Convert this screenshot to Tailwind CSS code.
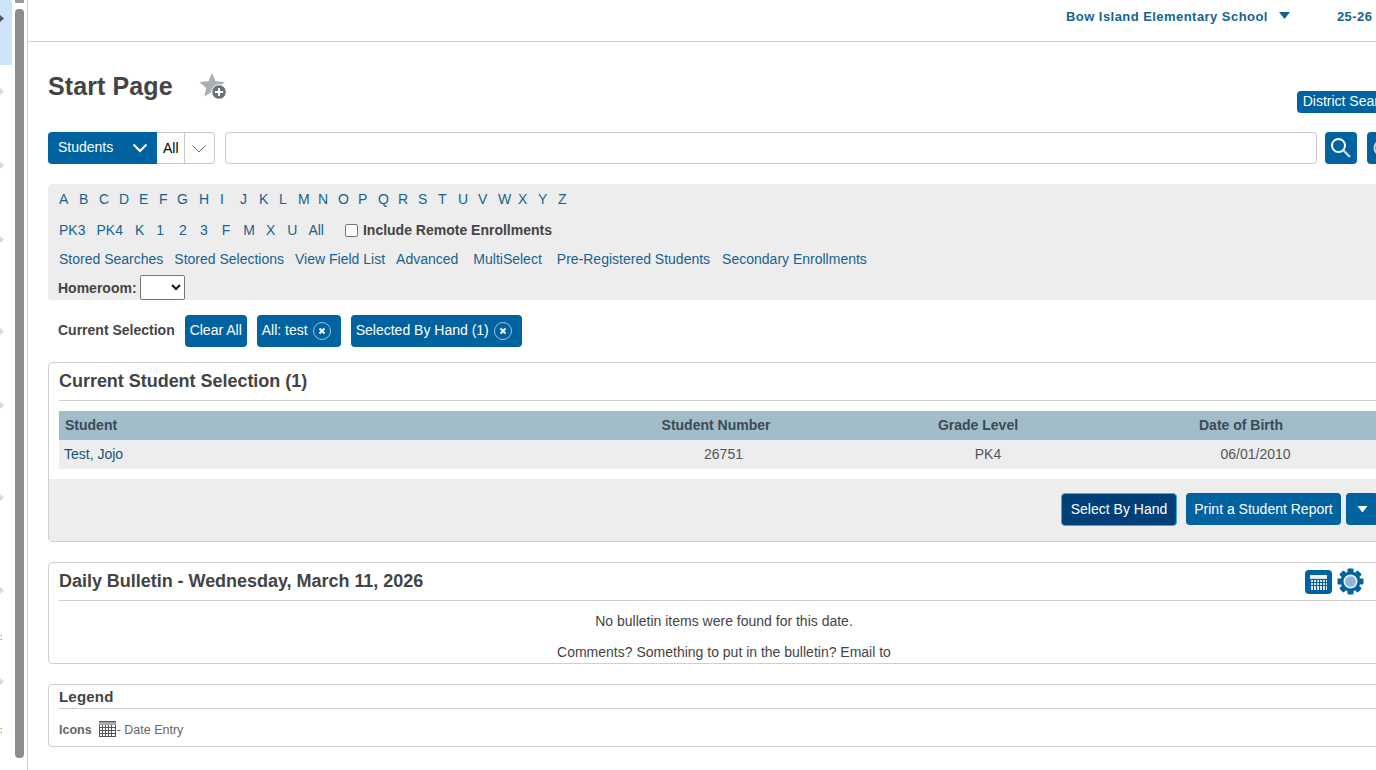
<!DOCTYPE html>
<html lang="en">
<head>
<meta charset="utf-8">
<title>Start Page</title>
<script src="https://cdn.jsdelivr.net/npm/@tailwindcss/browser@4"></script>
</head>
<body class="bg-white overflow-hidden font-['Liberation_Sans',Arial,sans-serif] text-[14px] text-[#444444]">
<div class="flex w-[1376px] h-[770px] overflow-hidden">
  <aside class="flex w-[28px] shrink-0 h-full border-r border-[#cfcfcf]">
    <div class="w-[12px] shrink-0 flex flex-col overflow-hidden">
      <div class="h-[65px] bg-[#cde4fb] pt-[15px] shrink-0"><svg width="4" height="7" viewBox="0 0 4 7" class="block"><path d="M0 0l4 3.5L0 7z" fill="#555"/></svg></div>
      <svg width="4" height="7" viewBox="0 0 4 7" class="block mt-[23px] shrink-0"><path d="M0 0l4 3.5L0 7z" fill="#d8d8d8"/></svg>
      <svg width="4" height="7" viewBox="0 0 4 7" class="block mt-[67px] shrink-0"><path d="M0 0l4 3.5L0 7z" fill="#d8d8d8"/></svg>
      <svg width="4" height="7" viewBox="0 0 4 7" class="block mt-[67px] shrink-0"><path d="M0 0l4 3.5L0 7z" fill="#d8d8d8"/></svg>
      <svg width="4" height="7" viewBox="0 0 4 7" class="block mt-[85px] shrink-0"><path d="M0 0l4 3.5L0 7z" fill="#d8d8d8"/></svg>
      <svg width="4" height="7" viewBox="0 0 4 7" class="block mt-[67px] shrink-0"><path d="M0 0l4 3.5L0 7z" fill="#d8d8d8"/></svg>
      <svg width="4" height="7" viewBox="0 0 4 7" class="block mt-[85px] shrink-0"><path d="M0 0l4 3.5L0 7z" fill="#d8d8d8"/></svg>
      <svg width="4" height="7" viewBox="0 0 4 7" class="block mt-[86px] shrink-0"><path d="M0 0l4 3.5L0 7z" fill="#d8d8d8"/></svg>
      <div class="mt-[38px] shrink-0 text-[9px] leading-[10px] text-[#555]">:</div>
      <svg width="4" height="7" viewBox="0 0 4 7" class="block mt-[36px] shrink-0"><path d="M0 0l4 3.5L0 7z" fill="#d8d8d8"/></svg>
      <div class="mt-[40px] shrink-0 text-[9px] leading-[10px] text-[#555]">:</div>
    </div>
    <div class="w-[9px] shrink-0 flex flex-col ml-[3px]">
      <div class="h-[3px] bg-[#999] rounded-b-[1px] mb-[6px]"></div>
      <div class="h-[749px] bg-[#8d8d8d] rounded-[4px]"></div>
    </div>
  </aside>
  <main class="w-[1420px] shrink-0">
    <header class="h-[42px] border-b border-[#cfcfcf] flex justify-start pl-[1038px] pt-[9px] font-bold text-[13px] leading-[15px] tracking-[0.45px] text-[#16638f]">
      <span class="whitespace-nowrap">Bow Island Elementary School</span>
      <svg width="11" height="7" viewBox="0 0 11 7" class="ml-[11px] mt-[3px] shrink-0"><path d="M0 0h11L5.5 7z" fill="#16638f"/></svg>
      <span class="ml-[47px] text-[#16638f]">25-26</span>
    </header>
    <div class="pl-[20px] pr-[10px]">
      <div class="flex h-[48px] pt-[28px] items-start">
        <h1 class="text-[25px] leading-[33px] font-bold tracking-[0.1px] text-[#444444]">Start Page</h1>
        <svg width="28" height="28" viewBox="0 0 28 28" class="ml-[26px] mt-[2px] shrink-0">
          <path d="M13 1l3.600 8.200 8.900.8-6.700 5.900 2 8.700L13 20.100l-7.800 4.500 2-8.700L.5 10l8.900-.8z" fill="#a9b0b4"/>
          <circle cx="20" cy="20" r="7.300" fill="#69747a" stroke="#fff" stroke-width="1"/>
          <path d="M20 16v8M16 20h8" stroke="#fff" stroke-width="2"/>
        </svg>
        <div class="ml-[1070px] mt-[21px] h-[22px] w-[100px] bg-[#00629f] rounded-[4px] text-white text-[14px] leading-[21px] pl-[6px] whitespace-nowrap shrink-0">District Search</div>
      </div>
      <div class="flex items-start mt-[42px] h-[32px]">
        <div class="w-[109px] h-[32px] bg-[#00629f] rounded-l-[4px] text-white leading-[30px] pl-[10px] flex justify-between pr-[9px] shrink-0">
          <span>Students</span>
          <svg width="16" height="10" viewBox="0 0 16 10" class="mt-[11px]"><path d="M1.500 1.500L8 8l6.500-6.500" fill="none" stroke="#fff" stroke-width="2"/></svg>
        </div>
        <div class="w-[58px] h-[32px] border border-l-0 border-[#c6c6c6] rounded-r-[4px] flex shrink-0 text-black">
          <span class="w-[28px] border-r border-[#c6c6c6] pl-[6px] leading-[31px]">All</span>
          <svg width="14" height="8" viewBox="0 0 14 8" class="ml-[7px] mt-[12px]"><path d="M.5.500L7 7l6.500-6.500" fill="none" stroke="#666" stroke-width="1"/></svg>
        </div>
        <div class="ml-[10px] w-[1092px] h-[32px] border border-[#c9c9c9] rounded-[4px] shrink-0"></div>
        <div class="ml-[8px] w-[32px] h-[32px] bg-[#00629f] rounded-[4px] shrink-0 flex items-center justify-center">
          <svg width="24" height="24" viewBox="0 0 24 24"><circle cx="9.500" cy="9.500" r="6.500" fill="none" stroke="#fff" stroke-width="2"/><path d="M14.500 14.500L21 21" stroke="#c7d9e6" stroke-width="2.400"/></svg>
        </div>
        <div class="ml-[10px] w-[32px] h-[32px] bg-[#00629f] rounded-[4px] shrink-0 flex items-center pl-[5px]">
          <svg width="20" height="20" viewBox="0 0 20 20"><circle cx="10" cy="10" r="7.500" fill="none" stroke="#c7d9e6" stroke-width="2"/></svg>
        </div>
      </div>
      <section class="mt-[20px] h-[116px] bg-[#ededed] rounded-[4px] pl-[11px] pt-[7px] text-[#16638f] leading-[16px]">
        <nav class="flex h-[16px] gap-x-0">
          <a class="w-[20px]">A</a><a class="w-[20px]">B</a><a class="w-[20px]">C</a><a class="w-[20px]">D</a><a class="w-[20px]">E</a><a class="w-[18px]">F</a><a class="w-[22px]">G</a><a class="w-[20px]">H</a><a class="w-[20px] pl-[1px]">I</a><a class="w-[20px] pl-[1px]">J</a><a class="w-[20px]">K</a><a class="w-[19px]">L</a><a class="w-[20px]">M</a><a class="w-[20px]">N</a><a class="w-[20px]">O</a><a class="w-[20px]">P</a><a class="w-[20px]">Q</a><a class="w-[20px]">R</a><a class="w-[20px]">S</a><a class="w-[20px]">T</a><a class="w-[20px]">U</a><a class="w-[20px]">V</a><a class="w-[20px]">W</a><a class="w-[20px]">X</a><a class="w-[20px]">Y</a><a class="w-[20px]">Z</a>
        </nav>
        <div class="flex items-center h-[16px] mt-[15px]">
          <a>PK3</a><a class="ml-[11px]">PK4</a><a class="ml-[12px]">K</a><a class="ml-[12px]">1</a><a class="ml-[15px]">2</a><a class="ml-[13px]">3</a><a class="ml-[14px]">F</a><a class="ml-[13px]">M</a><a class="ml-[11px]">X</a><a class="ml-[12px]">U</a><a class="ml-[11px]">All</a>
          <input type="checkbox" class="ml-[21px] w-[13px] h-[13px] mt-[1px] appearance-none bg-white border border-[#767676] rounded-[2px]">
          <span class="ml-[5px] font-bold text-[#444444]">Include Remote Enrollments</span>
        </div>
        <div class="flex h-[16px] mt-[13px]">
          <a>Stored Searches</a><a class="ml-[11px]">Stored Selections</a><a class="ml-[11px]">View Field List</a><a class="ml-[11px]">Advanced</a><a class="ml-[15px]">MultiSelect</a><a class="ml-[15px]">Pre-Registered Students</a><a class="ml-[12px]">Secondary Enrollments</a>
        </div>
        <div class="flex items-center mt-[8px] -ml-[1px]">
          <label class="font-bold text-[#444444]">Homeroom:</label>
          <div class="ml-[3px] w-[45px] h-[25px] bg-white border border-[#767676] rounded-[2px] flex justify-end items-center pr-[3px]">
            <svg width="10" height="7" viewBox="0 0 10 7"><path d="M1 1l4 4 4-4" fill="none" stroke="#111" stroke-width="2"/></svg>
          </div>
        </div>
      </section>
      <div class="flex items-center mt-[15px] h-[32px] pl-[10px]">
        <span class="font-bold text-[#444444] mr-[10px] pb-[2px]">Current Selection</span>
        <button class="h-[32px] w-[62px] pb-[2px] bg-[#00629f] rounded-[4px] text-white">Clear All</button>
        <button class="ml-[10px] h-[32px] w-[84px] pl-[5px] bg-[#00629f] rounded-[4px] text-white flex items-center">
          <span class="pb-[2px]">All: test</span>
          <svg width="18" height="18" viewBox="0 0 18 18" class="ml-[5px]"><circle cx="9" cy="9" r="8.500" fill="none" stroke="#9cc3de"/><path d="M6.500 6.500l5 5M11.500 6.500l-5 5" stroke="#fff" stroke-width="2"/></svg>
        </button>
        <button class="ml-[10px] h-[32px] w-[171px] pl-[5px] bg-[#00629f] rounded-[4px] text-white flex items-center">
          <span class="whitespace-nowrap pb-[2px]">Selected By Hand (1)</span>
          <svg width="18" height="18" viewBox="0 0 18 18" class="ml-[5px]"><circle cx="9" cy="9" r="8.500" fill="none" stroke="#9cc3de"/><path d="M6.500 6.500l5 5M11.500 6.500l-5 5" stroke="#fff" stroke-width="2"/></svg>
        </button>
      </div>
      <section class="mt-[15px] h-[180px] border border-[#cfcfcf] rounded-[4px] flex flex-col">
        <div class="mx-[10px] h-[38px] border-b border-[#cfcfcf] shrink-0 font-bold text-[18px] leading-[36px] tracking-[-0.03px] text-[#444444]">Current Student Selection (1)</div>
        <div class="mx-[10px] mt-[10px] shrink-0">
          <div class="grid grid-cols-[531px_265px_265px_265px] h-[29px] bg-[#a2bdca] font-bold items-center leading-[29px] text-[#3c4a52]">
            <span class="pl-[6px]">Student</span><span class="text-center pr-[13px]">Student Number</span><span class="text-center pr-[19px]">Grade Level</span><span class="text-center pr-[23px]">Date of Birth</span>
          </div>
          <div class="grid grid-cols-[531px_265px_265px_265px] h-[29px] bg-[#ededed] items-center leading-[29px] text-[#555555]">
            <a class="pl-[5px] text-[#16507f]">Test, Jojo</a><span class="text-center pl-[2px]">26751</span><span class="text-center pl-[1px]">PK4</span><span class="text-center pl-[6px]">06/01/2010</span>
          </div>
        </div>
        <div class="mt-[10px] flex-1 bg-[#ededed] flex items-start pl-[1012px] pt-[14px]">
          <button class="w-[116px] h-[33px] bg-[#003f78] border border-[#37b0e0] rounded-[4px] text-white shrink-0">Select By Hand</button>
          <button class="ml-[9px] w-[155px] h-[32px] bg-[#00629f] rounded-[4px] text-white shrink-0">Print a Student Report</button>
          <button class="ml-[5px] w-[32px] h-[32px] bg-[#00629f] rounded-[4px] shrink-0 flex items-center justify-center"><svg width="11" height="7" viewBox="0 0 11 7"><path d="M.5 0h10L5.500 6.500z" fill="#fff"/></svg></button>
        </div>
      </section>
      <section class="mt-[20px] h-[102px] border border-[#cfcfcf] rounded-[4px] overflow-hidden">
        <div class="mx-[10px] h-[38px] border-b border-[#cfcfcf] flex items-start font-bold text-[18px] leading-[36px] tracking-[-0.03px] text-[#444444]">
          <span>Daily Bulletin - Wednesday, March 11, 2026</span>
          <div class="ml-[882px] mt-[7px] w-[27px] h-[24px] bg-[#00629f] rounded-[4px] flex items-center justify-center shrink-0">
            <svg width="17" height="15" viewBox="0 0 17 15"><rect width="17" height="15" fill="#d5e2ec"/><path d="M0 4.500h17M0 7.500h17M0 10.500h17M.5 4v11M3.500 4v11M6.500 4v11M9.500 4v11M12.500 4v11M15.500 4v11" stroke="#00629f" stroke-width="1"/><rect x="0" y="0" width="17" height="3" fill="#eef3f7"/></svg>
          </div>
          <svg width="27" height="27" viewBox="0 0 27 27" class="ml-[5px] mt-[5px] shrink-0">
            <g fill="#00629f">
              <circle cx="13.500" cy="13.500" r="10"/>
              <rect x="10.500" y="0.500" width="6" height="26" rx="1"/>
              <rect x="0.500" y="10.500" width="26" height="6" rx="1"/>
              <rect x="10.500" y="0.500" width="6" height="26" rx="1" transform="rotate(45 13.500 13.500)"/>
              <rect x="10.500" y="0.500" width="6" height="26" rx="1" transform="rotate(-45 13.500 13.500)"/>
            </g>
            <circle cx="13.500" cy="13.500" r="7" fill="#e8f0f6"/>
            <circle cx="13.500" cy="13.500" r="5.300" fill="#8fb3d9"/>
          </svg>
        </div>
        <p class="text-center w-[1350px] mt-[12px] leading-[16px] text-[#444444]">No bulletin items were found for this date.</p>
        <p class="text-center w-[1350px] mt-[15px] leading-[16px] text-[#444444]">Comments? Something to put in the bulletin? Email to</p>
      </section>
      <section class="mt-[20px] h-[63px] border border-[#cfcfcf] rounded-[4px]">
        <div class="mx-[10px] h-[24px] border-b border-[#cfcfcf] font-bold text-[15px] leading-[24px] tracking-[0.2px] text-[#444444]">Legend</div>
        <div class="mx-[10px] flex items-center mt-[11px] h-[20px] text-[12.500px] text-[#666]">
          <span class="font-bold text-[#666]">Icons</span>
          <svg width="17" height="16" viewBox="0 0 17 16" class="ml-[7px] -mt-[2px]"><rect x=".5" y=".5" width="16" height="15" fill="#fff" stroke="#555"/><rect y="1" width="17" height="3" fill="#aaa"/><path d="M0 6.500h17M0 9.500h17M0 12.500h17M3.500 4v12M6.500 4v12M9.500 4v12M12.500 4v12" stroke="#555"/></svg>
          <span class="ml-[1px]">- Date Entry</span>
        </div>
      </section>
    </div>
  </main>
</div>
</body>
</html>
